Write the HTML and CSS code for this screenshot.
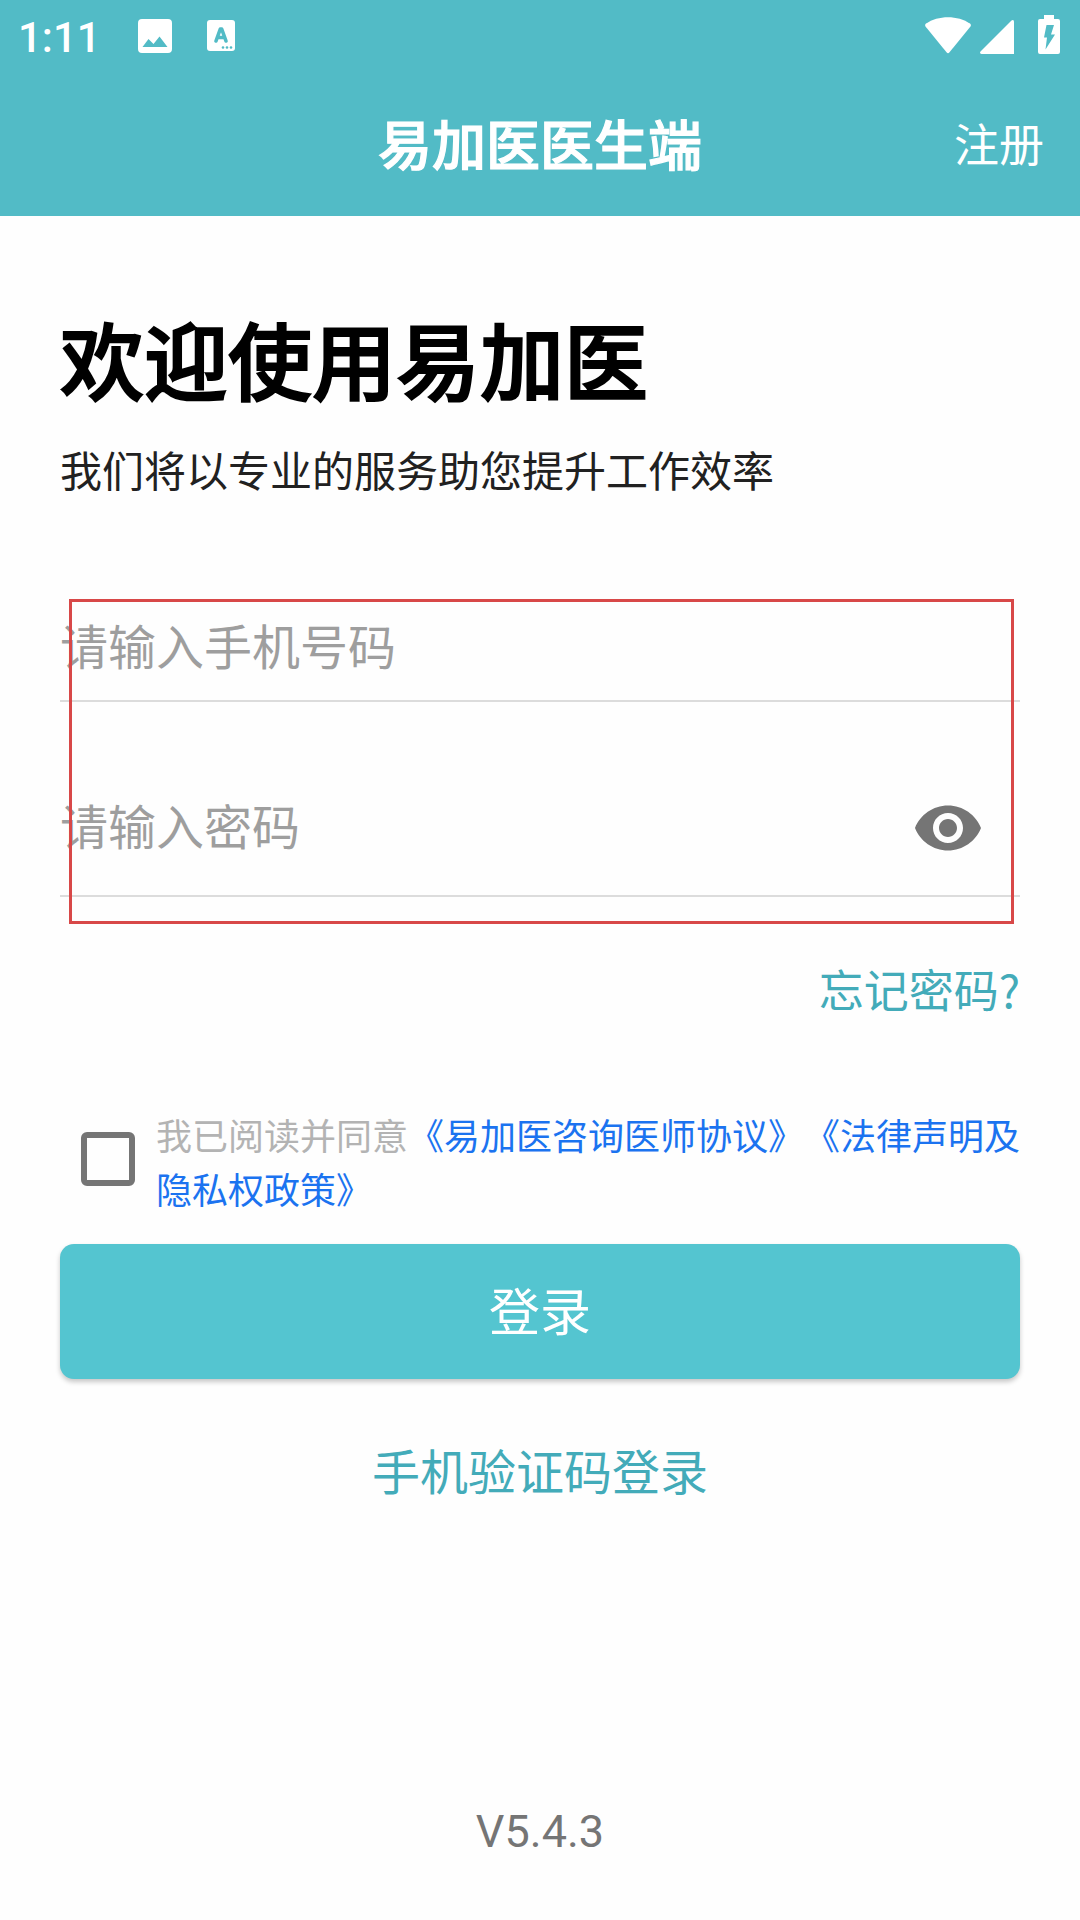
FILE: index.html
```html
<!DOCTYPE html>
<html lang="zh-CN">
<head>
    <meta charset="UTF-8">
    <meta name="viewport" content="width=device-width, initial-scale=1.0">
    <title>易加医医生端</title>
    <link rel="stylesheet" href="styles.css">
</head>
<body>
    <header class="header">
        <div class="status-bar">
            <span class="time">1:11</span>
            <svg class="icon-image" viewBox="0 0 34 34" width="34" height="34">
                <path fill="#fff" fill-rule="evenodd" d="M4 0h26a4 4 0 0 1 4 4v26a4 4 0 0 1-4 4H4a4 4 0 0 1-4-4V4a4 4 0 0 1 4-4zM4.500 28h25L21.500 17.500 15.500 25 10.500 20z"/>
            </svg>
            <svg class="icon-lang" viewBox="0 0 28 31" width="28" height="31">
                <rect width="28" height="31" rx="3" fill="#fff"/>
                <path fill="none" stroke="#52bbc6" stroke-width="3.600" stroke-linecap="round" stroke-linejoin="round" d="M9 21l4.300-12h1.400L19 21M10.800 17.500h6.400"/>
                <g fill="#52bbc6">
                    <circle cx="16" cy="27.500" r="1.300"/>
                    <circle cx="20" cy="27.500" r="1.300"/>
                    <circle cx="24" cy="27.500" r="1.300"/>
                </g>
            </svg>
            <div class="status-right">
                <svg class="icon-wifi" viewBox="0 0 46 37" width="46" height="37">
                    <path fill="#fff" d="M1 6.500C13-2 33-2 45 6.500q1.600 1.500.3 3.200L24.500 35.300q-1.500 1.700-3 0L.7 9.700Q-.6 8 1 6.500z"/>
                </svg>
                <svg class="icon-signal" viewBox="0 0 34 34" width="34" height="34">
                    <path fill="#fff" d="M34 1.500V34H1.500Q-.8 33.500.5 31.500L31.500.5Q33.500-.7 34 1.500z"/>
                </svg>
                <svg class="icon-battery" viewBox="0 0 22 39" width="22" height="39">
                    <path fill="#fff" d="M6 0h10v4h4q2 0 2 2v31q0 2-2 2H2q-2 0-2-2V6q0-2 2-2h4z"/>
                    <path fill="#52bbc6" d="M8.500 10h7.500l-3 9.500h4L7.500 34.500l1.500-12H6z"/>
                </svg>
            </div>
        </div>
        <div class="nav-bar">
            <h2 class="nav-title">易加医医生端</h2>
            <a class="register">注册</a>
        </div>
    </header>

    <main class="login-container">
        <h1>欢迎使用易加医</h1>
        <p class="subtitle">我们将以专业的服务助您提升工作效率</p>

        <form id="login-form">
            <div class="fields">
                <div class="field phone">
                    <input type="tel" id="phone" placeholder="请输入手机号码">
                </div>
                <div class="field password">
                    <input type="password" id="password" placeholder="请输入密码">
                    <svg class="icon-eye" viewBox="0 0 24 24" width="72" height="72">
                        <path fill="#757575" d="M12 4.500C7 4.500 2.730 7.610 1 12c1.730 4.390 6 7.500 11 7.500s9.270-3.110 11-7.500c-1.730-4.390-6-7.500-11-7.500zM12 17c-2.760 0-5-2.240-5-5s2.240-5 5-5 5 2.240 5 5-2.240 5-5 5zm0-8c-1.660 0-3 1.340-3 3s1.340 3 3 3 3-1.340 3-3-1.340-3-3-3z"/>
                    </svg>
                </div>
                <div class="highlight"></div>
            </div>

            <a class="forgot">忘记密码?</a>

            <div class="agreement">
                <input type="checkbox" id="agree">
                <p>我已阅读并同意<a>《易加医咨询医师协议》</a><a>《法律声明及隐私权政策》</a></p>
            </div>

            <button type="submit">登录</button>
        </form>

        <a class="code-login">手机验证码登录</a>
        <p class="version">V5.4.3</p>
    </main>
</body>
</html>
```

FILE: styles.css
```css
* {
    box-sizing: border-box;
}

body {
    font-family: "Noto Sans CJK SC", sans-serif;
    background-color: #fefefe;
    margin: 0;
    padding: 0;
    height: 1920px;
    overflow: hidden;
}

h1, h2, p {
    margin: 0;
}

svg {
    display: block;
    flex: none;
}

.header {
    height: 216px;
    background-color: #52bbc6;
    color: #ffffff;
}

.status-bar {
    display: flex;
    align-items: flex-start;
    height: 72px;
    padding: 0 20px 0 18px;
}

.time {
    width: 120px;
    padding-top: 14px;
    font-family: Roboto, sans-serif;
    font-size: 42px;
    font-weight: 500;
    line-height: 48px;
}

.icon-image {
    margin-top: 19px;
}

.icon-lang {
    margin: 20px 0 0 35px;
}

.status-right {
    display: flex;
    margin-left: auto;
}

.icon-wifi {
    margin-top: 17px;
}

.icon-signal {
    margin: 20px 24px 0 9px;
}

.icon-battery {
    margin-top: 15px;
}

.nav-bar {
    display: grid;
    grid-template-columns: 1fr auto 1fr;
    align-items: center;
    height: 141px;
    padding: 0 36px;
}

.nav-title {
    grid-column: 2;
    font-size: 54px;
    font-weight: 500;
    line-height: 80px;
    -webkit-text-stroke: 1.2px currentColor;
}

.register {
    justify-self: end;
    font-size: 45px;
    line-height: 80px;
}

.login-container {
    display: flex;
    flex-direction: column;
    padding: 92px 60px 0;
}

h1 {
    color: #000000;
    font-size: 84px;
    font-weight: 500;
    line-height: 100px;
    -webkit-text-stroke: 2px currentColor;
}

.subtitle {
    margin-top: 31px;
    color: #212121;
    font-size: 42px;
    line-height: 60px;
}

#login-form {
    display: flex;
    flex-direction: column;
    margin-top: 89px;
}

.fields {
    position: relative;
}

.field {
    display: flex;
    align-items: center;
    border-bottom: 2px solid #dcdcdc;
}

.phone {
    height: 114px;
}

.password {
    height: 144px;
    margin-top: 51px;
    padding-right: 36px;
}

.field input {
    flex: 1;
    height: 72px;
    padding: 0;
    border: none;
    outline: none;
    background: none;
    font-family: inherit;
    font-size: 48px;
}

.field input::placeholder {
    color: #9e9e9e;
}

.icon-eye {
    margin-top: 7px;
}

/* Red frame drawn over both fields */
.highlight {
    position: absolute;
    top: 11px;
    left: 9px;
    width: 945px;
    height: 325px;
    border: 3px solid #d84848;
    pointer-events: none;
}

.forgot {
    align-self: flex-end;
    margin-top: 62px;
    color: #43abb9;
    font-size: 45px;
    line-height: 60px;
}

.agreement {
    display: flex;
    align-items: flex-start;
    margin-top: 88px;
}

.agreement input {
    appearance: none;
    flex: none;
    width: 54px;
    height: 54px;
    margin: 25px 21px 0;
    border: 6px solid #757575;
    border-radius: 6px;
}

.agreement p {
    flex: none;
    width: 880px; /* room for 24 characters in the first line */
    color: #b3b3b3;
    font-size: 36px;
    line-height: 54px;
    text-spacing-trim: space-all; /* keep the 《》 marks full width */
}

.agreement a {
    color: #1b73f0;
}

button {
    height: 135px;
    margin-top: 29px;
    padding: 0 0 5px;
    background-color: #54c5d0;
    color: white;
    border: none;
    border-radius: 14px;
    box-shadow: 0 3px 5px rgba(0, 0, 0, 0.22);
    font-family: inherit;
    font-size: 51px;
    cursor: pointer;
}

.code-login {
    align-self: center;
    margin-top: 60px;
    color: #43abb9;
    font-size: 48px;
    line-height: 60px;
}

.version {
    margin-top: 303px;
    color: #757575;
    font-family: Roboto, sans-serif;
    font-size: 45px;
    line-height: 60px;
    text-align: center;
}
```
